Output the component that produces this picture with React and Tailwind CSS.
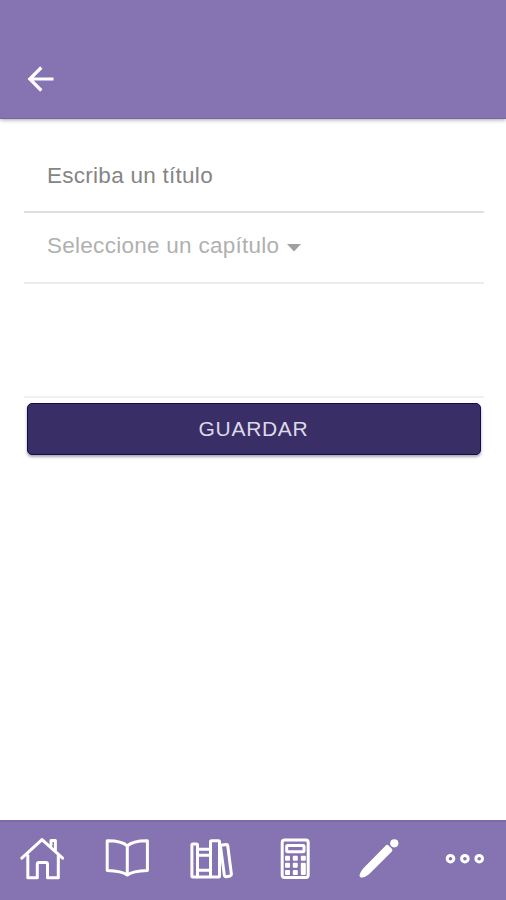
import React, { useState } from 'react';

const HomeIcon = () => (
    <>
        <path d="M1.8 21.2 22 2.6l20.600 18.600" />
        <path d="M7.800 18.500v22.300h9.500V27.200q0-1.700 1.700-1.700h6.800q1.700 0 1.700 1.700v13.600h10.800V18.500" />
        <path d="M31 8V3.600h4.400V13" />
    </>
);

const BookIcon = () => (
    <>
        <path d="M23.300 8.900C18.500 4.500 11.500 3.700 3.200 3.800v29.600c8 .2 15.200.6 20.100 4.600 4.900-4 12.100-4.400 20.100-4.600V3.800c-8.300-.1-15.300.7-20.100 5.100z" />
        <path d="M23.300 8.900v28.600" />
    </>
);

const LibraryIcon = () => (
    <>
        <rect x="2.900" y="6.900" width="5.600" height="33.200" rx="1" />
        <path d="M8.500 12.300H21M8.500 18.300H21M8.500 33.200H21M8.500 39.900H21" />
        <rect x="21.500" y="3.700" width="9" height="36.400" rx="1" />
        <path d="M31.500 8.200l6-.8q1 0 1.200 1l3.700 28.900q0 1.500-1.200 1.700l-4.300.8q-1.300 0-1.500-1.200L31.500 9.500" />
    </>
);

const CalculatorIcon = () => (
    <>
        <rect x="9.200" y="3" width="26" height="37.500" rx="2.500" />
        <rect x="13.700" y="8.600" width="17.300" height="6.200" rx="1" />
        <g fill="currentColor" stroke="none">
            <rect x="12" y="18.700" width="5" height="5" rx="1" />
            <rect x="19.800" y="18.700" width="5" height="5" rx="1" />
            <rect x="27.800" y="18.700" width="5" height="5" rx="1" />
            <rect x="12" y="25.800" width="5" height="5" rx="1" />
            <rect x="19.800" y="25.800" width="5" height="5" rx="1" />
            <rect x="12" y="32.900" width="5" height="5" rx="1" />
            <rect x="19.800" y="32.900" width="5" height="5" rx="1" />
            <rect x="27.800" y="25.800" width="5" height="12.100" rx="1" />
        </g>
    </>
);

const PencilIcon = () => (
    <g fill="currentColor" stroke="none">
        <path d="M28.800 8.400q1.500-1.200 2.800.1l3.200 3.200q1.300 1.400.1 2.800L12.800 36.500q-2.400 2.300-5.300 3.400l-2.200.7q-3.200.2-2.700-2.800l.9-2.200q1.200-2.700 3.400-4.900z" />
        <circle cx="37.300" cy="6.300" r="4.100" />
    </g>
);

const MoreIcon = () => (
    <>
        <circle cx="8.500" cy="21.700" r="3.300" />
        <circle cx="22.900" cy="21.700" r="3.300" />
        <circle cx="37.200" cy="21.700" r="3.300" />
    </>
);

const tabs = [
    { id: 'home', label: 'Inicio', Icon: HomeIcon },
    { id: 'book', label: 'Libro', Icon: BookIcon },
    { id: 'library', label: 'Biblioteca', Icon: LibraryIcon },
    { id: 'calculator', label: 'Calculadora', Icon: CalculatorIcon },
    { id: 'notes', label: 'Notas', Icon: PencilIcon },
    { id: 'more', label: 'Más', Icon: MoreIcon }
];

const Header = () => (
    <header className="flex h-[119px] shrink-0 items-end border-b border-[#7666a5] bg-[#8674b2] px-[27px] pb-[25px] shadow-[0_1px_4px_rgba(0,0,0,0.35)]">
        <button type="button" aria-label="Volver" className="text-white">
            <svg viewBox="0 0 28 28" className="size-7" fill="none" stroke="currentColor" strokeWidth="3.200">
                <path d="M26.500 14H3M14.300 2.500 2.800 14l11.500 11.500" />
            </svg>
        </button>
    </header>
);

const TabBar = () => (
    <nav className="flex h-20 shrink-0 border-t-2 border-[#7b6aab] bg-[#8674b2] pt-[15px] text-white">
        {tabs.map( ( { id, label, Icon } ) => (
            <button key={id} type="button" aria-label={label} className="flex flex-1 justify-center">
                <svg
                    viewBox="0 0 44 44"
                    className="size-11 overflow-visible"
                    fill="none"
                    stroke="currentColor"
                    strokeWidth="3"
                    strokeLinecap="round"
                    strokeLinejoin="round"
                >
                    <Icon />
                </svg>
            </button>
        ) )}
    </nav>
);

export default function App() {
    const [title, setTitle] = useState( '' );

    const handleSubmit = ( e ) => {
        e.preventDefault();
    };

    return (
        <div className="flex h-screen flex-col bg-white font-['Liberation_Sans',Arial,sans-serif]">
            <Header />
            <main className="flex-1">
                <form onSubmit={handleSubmit} className="ml-6 mr-[22px] pt-[21px]">
                    <div className="h-[73px] border-b-2 border-[#e0e0e0] pl-[23px]">
                        <input
                            type="text"
                            value={title}
                            onChange={( e ) => setTitle( e.target.value )}
                            placeholder="Escriba un título"
                            className="h-[71px] w-full text-[22.5px] tracking-[0.27px] text-[#808080] outline-none placeholder:text-[#858585]"
                        />
                    </div>
                    <div className="flex h-[71px] items-center border-b-2 border-[#ececec] pb-[3px] pl-[23px] text-[22.5px] tracking-[0.27px] text-[#b0b0b0]">
                        <span>Seleccione un capítulo</span>
                        <svg viewBox="0 0 14 8" className="mt-1 ml-2 h-2 w-3.5" fill="#a0a0a0">
                            <path d="M0 0h14L7 7.500z" />
                        </svg>
                    </div>
                    <div className="h-[114px] border-b-2 border-[#f0f0f0]" />
                    <button
                        type="submit"
                        className="mt-[5px] ml-[3px] block h-[52px] w-[454px] rounded-[5px] border border-[#140a55] bg-[#392e66] pr-px text-[21px] tracking-[0.7px] text-[#ddd9ea] shadow-[0_2px_3px_rgba(0,0,0,0.35)]"
                    >
                        GUARDAR
                    </button>
                </form>
            </main>
            <TabBar />
        </div>
    );
}
